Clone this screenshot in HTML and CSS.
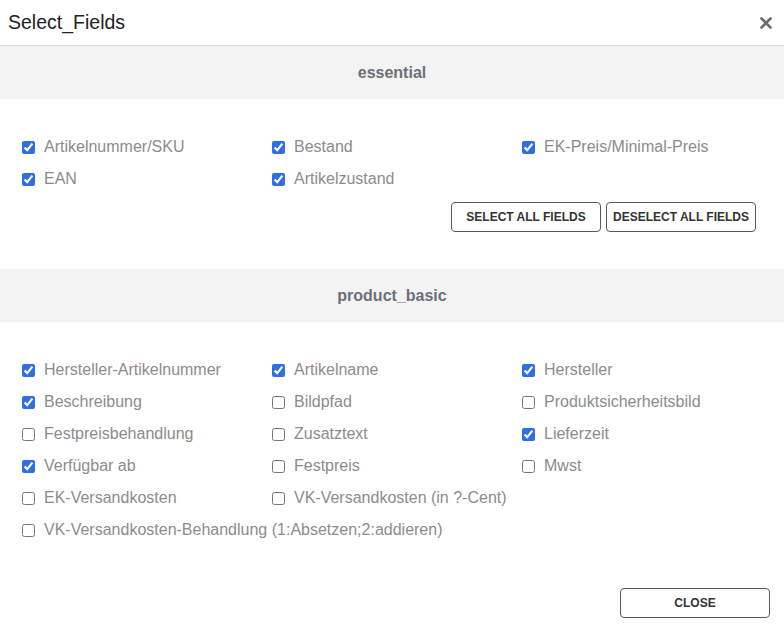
FILE: index.html
```html
<!DOCTYPE html>
<html lang="de">
<head>
    <meta charset="UTF-8">
    <title>Select_Fields</title>
    <link rel="stylesheet" href="styles.css">
</head>
<body>
    <div class="modal">
        <div class="modal-header">
            <span class="modal-title">Select_Fields</span>
            <span class="modal-close">
                <svg width="12" height="12" viewBox="0 0 12 12"><path d="M1.5 1.5 L10.5 10.5 M10.5 1.5 L1.5 10.5" stroke="#6b6b6b" stroke-width="2.6" stroke-linecap="round"/></svg>
            </span>
        </div>

        <div class="section-title">essential</div>
        <div class="section-body">
            <div class="field-grid">
                <label class="field"><input type="checkbox" checked> Artikelnummer/SKU</label>
                <label class="field"><input type="checkbox" checked> Bestand</label>
                <label class="field"><input type="checkbox" checked> EK-Preis/Minimal-Preis</label>
                <label class="field"><input type="checkbox" checked> EAN</label>
                <label class="field"><input type="checkbox" checked> Artikelzustand</label>
            </div>
            <div class="actions">
                <button class="btn">SELECT ALL FIELDS</button>
                <button class="btn">DESELECT ALL FIELDS</button>
            </div>
        </div>

        <div class="section-title">product_basic</div>
        <div class="section-body last">
            <div class="field-grid">
                <label class="field"><input type="checkbox" checked> Hersteller-Artikelnummer</label>
                <label class="field"><input type="checkbox" checked> Artikelname</label>
                <label class="field"><input type="checkbox" checked> Hersteller</label>
                <label class="field"><input type="checkbox" checked> Beschreibung</label>
                <label class="field"><input type="checkbox"> Bildpfad</label>
                <label class="field"><input type="checkbox"> Produktsicherheitsbild</label>
                <label class="field"><input type="checkbox"> Festpreisbehandlung</label>
                <label class="field"><input type="checkbox"> Zusatztext</label>
                <label class="field"><input type="checkbox" checked> Lieferzeit</label>
                <label class="field"><input type="checkbox" checked> Verfügbar ab</label>
                <label class="field"><input type="checkbox"> Festpreis</label>
                <label class="field"><input type="checkbox"> Mwst</label>
                <label class="field"><input type="checkbox"> EK-Versandkosten</label>
                <label class="field"><input type="checkbox"> VK-Versandkosten (in ?-Cent)</label>
                <label class="field wide"><input type="checkbox"> VK-Versandkosten-Behandlung (1:Absetzen;2:addieren)</label>
            </div>
        </div>

        <div class="modal-footer">
            <button class="btn btn-close">CLOSE</button>
        </div>
    </div>
</body>
</html>
```

FILE: styles.css
```css
body {
    margin: 0;
    font-family: "Liberation Sans", Arial, sans-serif;
    background: #fff;
}

.modal {
    width: 784px;
}

.modal-header {
    height: 45px;
    padding: 0 12px 0 8px;
    display: flex;
    align-items: center;
    justify-content: space-between;
    border-bottom: 1px solid #dedede;
}

.modal-title {
    font-size: 19.5px;
    color: #222;
}

.modal-close {
    display: flex;
    align-items: center;
}

.section-title {
    height: 53px;
    background: #f3f3f3;
    display: flex;
    align-items: center;
    justify-content: center;
    font-size: 16px;
    font-weight: bold;
    color: #6c7077;
}

.section-body {
    padding: 32px 28px 37px 22px;
}

.section-body.last {
    padding-bottom: 0;
}

.field-grid {
    display: grid;
    grid-template-columns: 250px 250px 250px;
}

.field {
    height: 32px;
    display: flex;
    align-items: center;
    gap: 9px;
    font-size: 16px;
    color: #8c8c8c;
    white-space: nowrap;
}

.field.wide {
    grid-column: 1 / 4;
}

.field input {
    margin: 0;
    width: 13px;
    height: 13px;
    accent-color: #2f6fe4;
}

.actions {
    display: flex;
    justify-content: flex-end;
    gap: 5px;
    margin-top: 7px;
}

.btn {
    width: 150px;
    height: 30px;
    background: #fff;
    border: 1px solid #5a5a5a;
    border-radius: 4px;
    font-family: "Liberation Sans", Arial, sans-serif;
    font-size: 12px;
    font-weight: bold;
    color: #333;
    padding: 0;
    cursor: pointer;
}

.modal-footer {
    display: flex;
    justify-content: flex-end;
    padding: 42px 14px 0 0;
}
```
